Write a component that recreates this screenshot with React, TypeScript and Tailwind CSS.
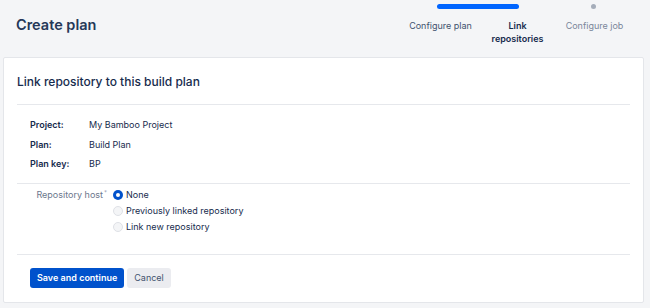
import React from "react";

const font = { fontFamily: "Inter, 'Noto Sans', sans-serif" };

const details = [
  { label: "Project:", value: "My Bamboo Project" },
  { label: "Plan:", value: "Build Plan" },
  { label: "Plan key:", value: "BP" },
];

const hosts = ["None", "Previously linked repository", "Link new repository"];

const Radio = ({ checked }: { checked: boolean }) =>
  checked ? (
    <span className="flex h-[10px] w-[10px] items-center justify-center rounded-full bg-[#0052cc]">
      <span className="h-[4px] w-[4px] rounded-full bg-white" />
    </span>
  ) : (
    <span className="h-[10px] w-[10px] rounded-full border border-[#dfe1e6] bg-[#f4f5f7]" />
  );

const Steps = () => (
  <div className="flex w-[231px] flex-col pt-[4px]">
    <div className="flex h-[5px] items-center">
      <div className="w-[35px]" />
      <div className="h-[5px] w-[82px] rounded-full bg-[#0065ff]" />
      <div className="flex-1" />
      <div className="h-[5px] w-[5px] rounded-full bg-[#a5adba]" />
      <div className="w-[37px]" />
    </div>
    <div className="mt-[9.5px] flex text-center text-[9px] leading-[13px]">
      <div className="w-[77px] text-[#42526e]">Configure plan</div>
      <div className="w-[77px] font-semibold text-[#172b4d]">
        Link
        <br />
        repositories
      </div>
      <div className="w-[77px] text-[#7a869a]">Configure job</div>
    </div>
  </div>
);

export default function App() {
  return (
    <div className="min-h-[308px] w-[650px] bg-[#f4f5f7]" style={font}>
      <header className="flex h-[57px] justify-between pr-[17px]">
        <h1 className="pl-4 pt-[15px] text-[14.5px] font-semibold leading-[20px] text-[#253858]">
          Create plan
        </h1>
        <Steps />
      </header>

      <section className="ml-[3px] mr-[6px] rounded-[2px] border border-[#e4e6ea] bg-white px-[13px] pb-[14px] pt-[16px]">
        <h2 className="mb-[14px] text-[12px] font-medium leading-[16px] text-[#172b4d]">
          Link repository to this build plan
        </h2>

        <div className="border-t border-[#e6e8ec] pb-[9px] pl-[13px] pt-[10px] text-[9px] leading-[19.5px] text-[#172b4d]">
          {details.map((d) => (
            <div key={d.label} className="flex">
              <span className="w-[59px] font-semibold">{d.label}</span>
              <span>{d.value}</span>
            </div>
          ))}
        </div>

        <div className="flex border-t border-[#e6e8ec] pb-[19px] pt-[3px] text-[9px] leading-[16px]">
          <div className="w-[90px] text-right text-[#6b778c]">
            Repository host
            <sup className="ml-[1px] text-[6px] text-[#97a0af]">*</sup>
          </div>
          <div className="ml-[6px] flex flex-col">
            {hosts.map((h, i) => (
              <label key={h} className="flex h-[16px] items-center gap-[2px] text-[#172b4d]">
                <Radio checked={i === 0} />
                <span className="ml-[1px]">{h}</span>
              </label>
            ))}
          </div>
        </div>

        <div className="flex gap-[3px] border-t border-[#e6e8ec] pl-[13px] pt-[13px]">
          <button className="h-[20px] rounded-[3px] bg-[#0052cc] px-[7px] text-[9px] font-semibold text-white">
            Save and continue
          </button>
          <button className="h-[20px] rounded-[3px] bg-[#ebecf0] px-[7px] text-[9px] text-[#42526e]">
            Cancel
          </button>
        </div>
      </section>
    </div>
  );
}
